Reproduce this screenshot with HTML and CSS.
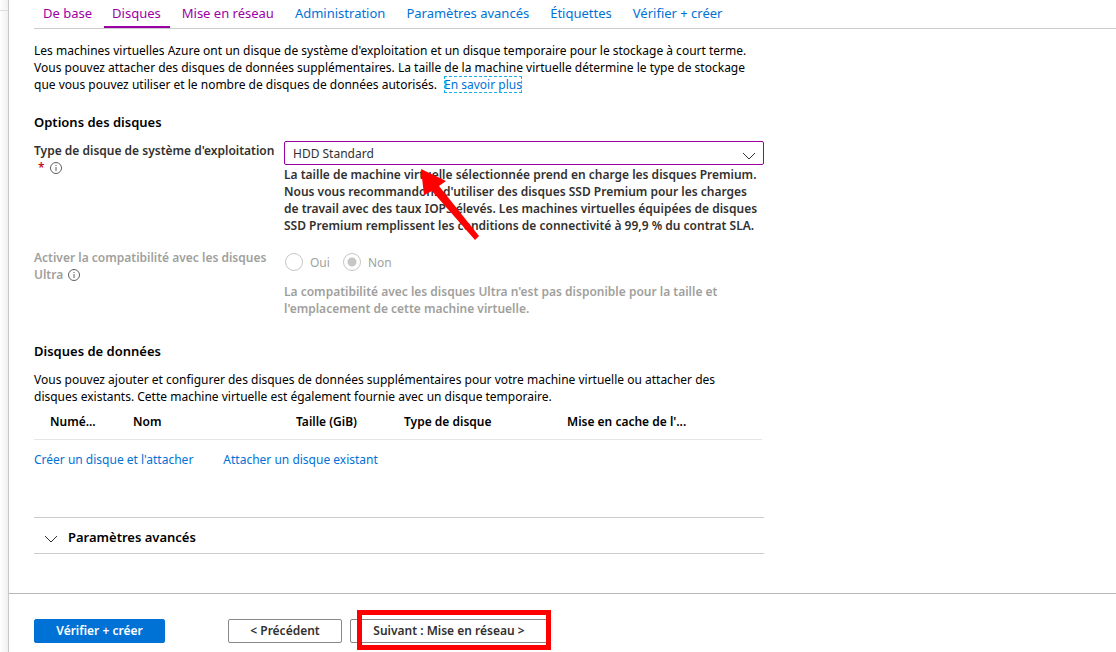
FILE: index.html
```html
<!DOCTYPE html>
<html lang="fr">
<head>
<meta charset="utf-8">
<meta name="viewport" content="width=device-width, initial-scale=1">
<title>Créer une machine virtuelle - Disques</title>
<link rel="stylesheet" href="styles.css">
</head>
<body class="page">
<div class="rail"></div>
<div class="blade">
  <main class="content">
    <nav class="tabs">
      <a class="tab visited" href="#base">De base</a>
      <a class="tab visited current" href="#disques" aria-current="page">Disques</a>
      <a class="tab visited" href="#reseau">Mise en réseau</a>
      <a class="tab" href="#administration">Administration</a>
      <a class="tab" href="#avances">Paramètres avancés</a>
      <a class="tab" href="#etiquettes">Étiquettes</a>
      <a class="tab" href="#verifier">Vérifier + créer</a>
    </nav>

    <p class="text intro">Les machines virtuelles Azure ont un disque de système d'exploitation et un disque temporaire pour le stockage à court terme.<br>Vous pouvez attacher des disques de données supplémentaires. La taille de la machine virtuelle détermine le type de stockage<br>que vous pouvez utiliser et le nombre de disques de données autorisés. <a class="link more" href="#savoir">En savoir plus</a></p>

    <h2 class="heading">Options des disques</h2>
    <div class="field">
      <div class="field-label">
        <label for="os-disk">Type de disque de système d'exploitation</label><br>
        <span class="required">*</span>
        <svg class="info" viewBox="0 0 12 12" role="img" aria-label="Informations"><circle cx="6" cy="6" r="5.5"/><path d="M6 5v4M6 3v1"/></svg>
      </div>
      <div class="field-body">
        <div class="select-wrap">
          <select class="select" id="os-disk"><option>HDD Standard</option></select>
          <svg class="chevron select-chevron" viewBox="0 0 14 8"><path d="M1 1l6 6 6-6"/></svg>
          <svg class="arrow" viewBox="0 0 60 72"><path d="M1 1L26 13L19 18L59 68L55 72L12 23L4 27Z"/></svg>
        </div>
        <p class="hint">La taille de machine virtuelle sélectionnée prend en charge les disques Premium.<br>Nous vous recommandons d'utiliser des disques SSD Premium pour les charges<br>de travail avec des taux IOPS élevés. Les machines virtuelles équipées de disques<br>SSD Premium remplissent les conditions de connectivité à 99,9 % du contrat SLA.</p>
      </div>
    </div>

    <div class="field ultra">
      <div class="field-label" id="ultra-label">Activer la compatibilité avec les disques<br>Ultra <svg class="info" viewBox="0 0 12 12" role="img" aria-label="Informations"><circle cx="6" cy="6" r="5.5"/><path d="M6 5v4M6 3v1"/></svg></div>
      <div class="field-body">
        <div class="radios" role="radiogroup" aria-labelledby="ultra-label">
          <label class="radio-label"><input class="radio" type="radio" name="ultra" disabled>Oui</label>
          <label class="radio-label"><input class="radio" type="radio" name="ultra" checked disabled>Non</label>
        </div>
        <p class="hint">La compatibilité avec les disques Ultra n'est pas disponible pour la taille et<br>l'emplacement de cette machine virtuelle.</p>
      </div>
    </div>

    <h2 class="heading data-heading">Disques de données</h2>
    <p class="text">Vous pouvez ajouter et configurer des disques de données supplémentaires pour votre machine virtuelle ou attacher des<br>disques existants. Cette machine virtuelle est également fournie avec un disque temporaire.</p>
    <table class="disks">
      <colgroup><col class="c-num"><col class="c-name"><col class="c-size"><col class="c-type"><col></colgroup>
      <thead><tr><th>Numé...</th><th>Nom</th><th>Taille (GiB)</th><th>Type de disque</th><th>Mise en cache de l'...</th></tr></thead>
    </table>
    <div class="actions">
      <a class="link" href="#creer">Créer un disque et l'attacher</a>
      <a class="link" href="#attacher">Attacher un disque existant</a>
    </div>
    <button class="accordion" type="button" aria-expanded="false">
      <svg class="chevron" viewBox="0 0 14 8"><path d="M1 1l6 6 6-6"/></svg>
      Paramètres avancés
    </button>
  </main>
  <footer class="footer">
    <button class="btn primary" type="button">Vérifier + créer</button>
    <button class="btn previous" type="button">&lt; Précédent</button>
    <div class="next-wrap">
      <button class="btn next" type="button">Suivant : Mise en réseau &gt;</button>
      <div class="highlight"></div>
    </div>
  </footer>
</div>
</body>
</html>
```

FILE: styles.css
```css
* { box-sizing: border-box; }
.page {
  margin: 0;
  display: flex;
  min-height: 100vh;
  background: #fff;
  color: #000;
  font: 12px/17px "Noto Sans", "Open Sans", sans-serif;
}
.rail {
  width: 8px;
  flex: none;
  padding-top: 10px;
  background: linear-gradient(to right, #fff, #f0f0f0);
}
.rail::before { content: ""; display: block; border-top: 1px solid #ddd; }
.blade { flex: 1; border-left: 1px solid #c8c8c8; }
.content { padding: 0 25px 39px; }
.tabs {
  display: flex;
  gap: 4px;
  height: 29px;
  padding-left: 1px;
  border-bottom: 1px solid #ccc;
  margin-right: -25px;
}
.tab {
  height: 28px;
  padding: 4px 8px 0;
  font-size: 13px;
  line-height: 18px;
  color: #0072d6;
  text-decoration: none;
  white-space: nowrap;
}
.tab + .tab { padding-right: 9px; }
.visited { color: #9b00a5; }
.current { border-bottom: 2px solid #9b00a5; }
.text { margin: 0; white-space: nowrap; }
.intro { margin-top: 13px; }
.link { color: #0072d6; text-decoration: none; }
.more { margin-left: 4px; outline: 1px dashed #18b0e8; outline-offset: -1px; }
.heading { margin: 21px 0 10px; font-size: 13px; line-height: 17px; font-weight: 600; }
.field {
  display: grid;
  grid-template-columns: 250px minmax(0, 480px);
  color: #323130;
  font-weight: 600;
  white-space: nowrap;
}
.field-label { padding-top: 1px; }
.required { color: #c4121f; margin-left: 4px; }
.info { width: 12px; height: 12px; margin-left: 2px; vertical-align: -2px; fill: none; stroke: #605e5c; stroke-width: 1; }
.select-wrap { position: relative; }
.select {
  appearance: none;
  display: block;
  width: 100%;
  height: 24px;
  padding: 0 8px;
  border: 1px solid #9b00a5;
  border-radius: 2px;
  background: #fff;
  color: #323130;
  font: 400 12px "Noto Sans", "Open Sans", sans-serif;
}
.chevron { width: 14px; height: 8px; fill: none; stroke: #323130; stroke-width: 1; }
.select-chevron { position: absolute; right: 8px; top: 11px; pointer-events: none; }
.arrow { position: absolute; left: 136px; top: 27px; width: 60px; height: 72px; fill: #f00; pointer-events: none; }
.hint { margin: 1px 0 0; }
.ultra { margin-top: 15px; color: #a19f9d; }
.ultra .field-label { padding-top: 0; }
.radios { display: flex; gap: 12px; padding-top: 4px; font-weight: 400; }
.radio-label { display: flex; align-items: center; gap: 7px; height: 18px; }
.radio {
  appearance: none;
  width: 18px;
  height: 18px;
  margin: 0 0 0 1px;
  border: 1px solid #c8c6c4;
  border-radius: 50%;
  background: #fff;
}
.radio:checked { background: radial-gradient(circle, #c8c6c4 4px, transparent 5px); }
.radios + .hint { margin-top: 12px; }
.data-heading { margin: 26px 0 11px; }
.disks { width: 728px; max-width: 100%; table-layout: fixed; border-collapse: collapse; border-bottom: 1px solid #e6e6e6; }
.disks th { padding: 8px 0 9px 16px; text-align: left; font-weight: 600; white-space: nowrap; }
.c-num { width: 83px; }
.c-name { width: 163px; }
.c-size { width: 108px; }
.c-type { width: 163px; }
.actions { display: flex; gap: 30px; margin-top: 11px; }
.accordion {
  display: flex;
  align-items: center;
  gap: 10px;
  width: 100%;
  max-width: 730px;
  height: 37px;
  margin-top: 49px;
  padding: 3px 10px 0;
  border: 0;
  border-top: 1px solid #ccc;
  border-bottom: 1px solid #ccc;
  background: none;
  color: #000;
  font: 600 13px/17px "Noto Sans", "Open Sans", sans-serif;
}
.accordion .chevron { margin-top: 4px; }
.footer { display: flex; padding: 25px; border-top: 1px solid #b8b8b8; }
.btn {
  height: 24px;
  padding: 0 20px 2px;
  border: 1px solid #8a8886;
  border-radius: 2px;
  background: #fff;
  color: #323130;
  font: 600 12px "Noto Sans", "Open Sans", sans-serif;
  white-space: nowrap;
}
.primary { width: 131px; border-color: #0072d6; background: #0072d6; color: #fff; }
.previous { width: 114px; margin-left: 63px; }
.next-wrap { position: relative; margin-left: 8px; }
.next { width: 198px; }
.highlight { position: absolute; left: 7px; top: -9px; width: 194px; height: 40px; border: 5px solid #f00; pointer-events: none; }
```
